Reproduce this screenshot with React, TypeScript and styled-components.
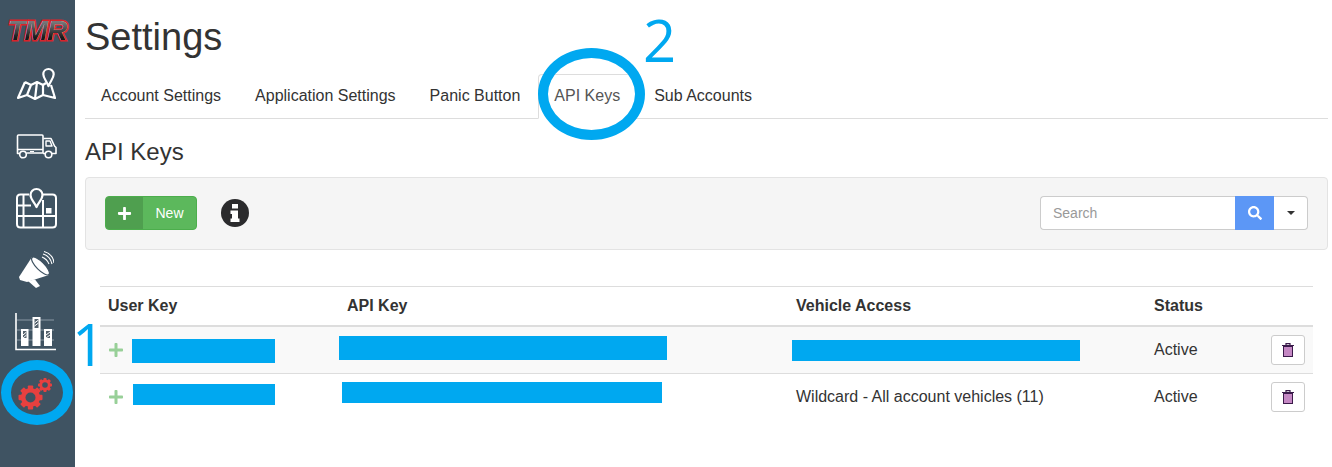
import React from 'react';
import styled, { createGlobalStyle } from 'styled-components';
import { FaPlus, FaSearch } from 'react-icons/fa';

const GlobalStyle = createGlobalStyle`
	html, body {
		margin: 0;
		padding: 0;
		background: #fff;
	}
	body {
		font-family: 'Liberation Sans', Arial, sans-serif;
		color: #333;
	}
`;

const MapIcon = () => (
	<svg width="44" height="36" viewBox="0 0 44 36" fill="none" stroke="#fff" strokeWidth="2.2" strokeLinejoin="round">
		<path d="M11 16 L17 19 L23 16 L29 19 L32 17 M11 16 L4 32 L13 29 L21 33 L29 29 L41 32 L37 19 M17 19 L13 29 M23 16 L21 33 M29 19 L29 29" />
		<path d="M34.500 3 a5.200 5.200 0 0 1 5.200 5.200 c0 4 -3.500 7 -5.200 12 c-1.700 -5 -5.200 -8 -5.200 -12 a5.200 5.200 0 0 1 5.200 -5.200 Z" fill="#3f5362" />
	</svg>
);

const TruckIcon = () => (
	<svg width="42" height="26" viewBox="0 0 42 26" fill="none" stroke="#fff" strokeWidth="1.600" strokeLinejoin="round">
		<path d="M4.500 20.500 H2.500 V17 M28 20 H11.500 M2.500 17 V3 Q2.500 2 3.500 2 H27 Q28 2 28 3 V20 M2.500 16.500 H28" />
		<path d="M28.500 5.500 H36 L39.500 13 L41 14.500 V20.500 H37 M30 20.500 H28" />
		<path d="M31 8 H35 L37 13 H31 Z" strokeWidth="1.400" />
		<circle cx="8" cy="21.500" r="3.300" />
		<circle cx="33.500" cy="21.500" r="3.300" />
		<path d="M15 18.500 H19" strokeWidth="1" />
	</svg>
);

const GridMapIcon = () => (
	<svg width="42" height="42" viewBox="0 0 42 42" fill="none" stroke="#fff" strokeWidth="2" strokeLinejoin="round">
		<path d="M14 7.500 H5.500 Q2 7.500 2 11 V37 Q2 40.500 5.500 40.500 H37.500 Q41 40.500 41 37 V11 Q41 7.500 37.500 7.500 H28" />
		<path d="M2 18.500 H16 M2 29 H41 M8.500 7.500 V40.500 M28 13 V40.500" />
		<path d="M21.500 2 a6 6 0 0 1 6 6 c0 4.500 -4 7 -6 12 c-2 -5 -6 -7.500 -6 -12 a6 6 0 0 1 6 -6 Z" fill="#3f5362" strokeWidth="2.200" />
		<rect x="31" y="21" width="5.500" height="5.500" fill="#fff" stroke="none" />
	</svg>
);

const MegaphoneIcon = () => (
	<svg width="36" height="38" viewBox="0 0 36 38" fill="none">
		<path d="M14 6 L31 24 L9 31 L2 29 L1 26 Z" fill="#fff" />
		<ellipse cx="22.500" cy="15" rx="12" ry="4" transform="rotate(45 22.500 15)" fill="#fff" stroke="#3f5362" strokeWidth="1.200" />
		<path d="M10 30 L17 28.500 L22 35 L18 37 Z" fill="#fff" />
		<path d="M24 6 Q29 8 31 13 M25 3 Q32 5 34 13 M26 0.500 Q35 3 36 12" stroke="#fff" strokeWidth="1.100" />
	</svg>
);

const ChartIcon = () => (
	<svg width="42" height="40" viewBox="0 0 42 40" fill="none">
		<path d="M2 8 H39 M2 18 H39 M2 28 H39" stroke="#8b99a4" strokeWidth="1" />
		<path d="M1 1 V37.500 H41" stroke="#fff" strokeWidth="1.600" />
		<rect x="6" y="17" width="7.500" height="17" fill="#fff" />
		<rect x="17.500" y="5" width="8" height="29" fill="#fff" />
		<rect x="29" y="17" width="8" height="17" fill="#fff" />
		<path d="M8 19 H11.500 V26 H8 Z M19.500 7 H23.500 V16 H19.500 Z M31 19 H35 V26 H31 Z" fill="#55626d" />
		<path d="M8 23 L11.500 20 M8 26 L11.500 23 M19.500 11 L23.500 8 M19.500 14 L23.500 11 M31 23 L35 20 M31 26 L35 23" stroke="#fff" strokeWidth="1" />
	</svg>
);

const Gear = ({ cx, cy, r, hole, teeth }: { cx: number; cy: number; r: number; hole: number; teeth: number }) => (
	<g>
		{Array.from({ length: teeth }, (_, i) => (
			<rect
				key={i}
				x={cx - r * 0.22}
				y={cy - r}
				width={r * 0.44}
				height={r * 2}
				rx="0.8"
				fill="#e8403f"
				transform={`rotate(${(i * 180) / teeth} ${cx} ${cy})`}
			/>
		))}
		<circle cx={cx} cy={cy} r={r * 0.8} fill="#e8403f" />
		<circle cx={cx} cy={cy} r={hole} fill="#3f5362" />
	</g>
);

const GearsIcon = () => (
	<svg width="36" height="36" viewBox="0 0 36 36">
		<Gear cx={12.500} cy={21.500} r={12} hole={5} teeth={4} />
		<Gear cx={27} cy={9} r={7} hole={2.800} teeth={4} />
	</svg>
);

const TrashIcon = () => (
	<svg width="12" height="14" viewBox="0 0 12 14" fill="none">
		<path d="M4 2 V0.700 H8 V2 M0 2.500 H12" stroke="#3a1a4a" strokeWidth="1.200" />
		<rect x="1.500" y="3.500" width="9" height="10" fill="#fff" stroke="#3a1a4a" strokeWidth="1" />
		<path d="M3 4 V13 M5 4 V13 M7 4 V13 M9 4 V13" stroke="#8a1088" strokeWidth="1" />
	</svg>
);

const InfoIcon = () => (
	<svg width="28" height="28" viewBox="0 0 28 28">
		<circle cx="14" cy="14" r="14" fill="#2b2b2d" />
		<path d="M11 5 H17 V9.500 H11 Z M9.500 11.500 H17 V19.500 H18.500 V23 H9.500 V19.500 H11 V15 H9.500 Z" fill="#fff" />
	</svg>
);

const rows = [
	{ id: 1, vehicles: '', striped: true },
	{ id: 2, vehicles: 'Wildcard - All account vehicles (11)', striped: false },
];

const App = () => {
	return (
		<Page>
			<GlobalStyle />
			<Sidebar>
				<Logo>TMR</Logo>
				<NavItem><MapIcon /></NavItem>
				<NavItem><TruckIcon /></NavItem>
				<NavItem><GridMapIcon /></NavItem>
				<NavItem><MegaphoneIcon /></NavItem>
				<NavItem><ChartIcon /></NavItem>
				<NavItem><GearsIcon /></NavItem>
			</Sidebar>
			<Main>
				<Title>Settings</Title>
				<Tabs>
					<Tab>Account Settings</Tab>
					<Tab>Application Settings</Tab>
					<Tab>Panic Button</Tab>
					<Tab $active>API Keys</Tab>
					<Tab>Sub Accounts</Tab>
				</Tabs>
				<SectionTitle>API Keys</SectionTitle>
				<Well>
					<NewButton>
						<NewIcon><FaPlus size={15} /></NewIcon>
						<NewLabel>New</NewLabel>
					</NewButton>
					<InfoButton><InfoIcon /></InfoButton>
					<SearchGroup>
						<SearchInput>Search</SearchInput>
						<SearchButton><FaSearch size={14} /></SearchButton>
						<CaretButton><Caret /></CaretButton>
					</SearchGroup>
				</Well>
				<KeysTable>
					<colgroup>
						<col width="239" />
						<col width="449" />
						<col width="358" />
						<col width="115" />
						<col width="52" />
					</colgroup>
					<thead>
						<tr>
							<Th>User Key</Th>
							<Th>API Key</Th>
							<Th>Vehicle Access</Th>
							<Th>Status</Th>
							<Th />
						</tr>
					</thead>
					<tbody>
						{rows.map((row) => (
							<Row key={row.id} $striped={row.striped}>
								<Td><Expand><FaPlus size={16} /></Expand></Td>
								<Td />
								<Td>{row.vehicles}</Td>
								<Td>Active</Td>
								<Td><TrashButton><TrashIcon /></TrashButton></Td>
							</Row>
						))}
					</tbody>
				</KeysTable>
			</Main>

			<Redact $x={132} $y={339} $w={143} $h={24} />
			<Redact $x={339} $y={336} $w={328} $h={24} />
			<Redact $x={792} $y={340} $w={288} $h={21} />
			<Redact $x={133} $y={384} $w={142} $h={21} />
			<Redact $x={342} $y={382} $w={320} $h={21} />
			<Ring $x={538} $y={48} $w={107} $h={92} />
			<Ring $x={1} $y={360} $w={72} $h={65} />
			<Digit $x={72} $y={315}>1</Digit>
			<Digit $x={643} $y={11}>2</Digit>
		</Page>
	);
};

const Page = styled.div`
	position: relative;
	display: flex;
	width: 1332px;
	height: 467px;
	overflow: hidden;
`;

const Sidebar = styled.nav`
	flex: none;
	width: 75px;
	background: #3f5362;
	display: flex;
	flex-direction: column;
`;

const Logo = styled.div`
	position: relative;
	height: 53px;
	padding-top: 14px;
	box-sizing: border-box;
	text-align: center;
	font-size: 28px;
	line-height: 33px;
	font-weight: 700;
	font-style: italic;
	letter-spacing: -0.5px;
	color: #e9e3e3;
	-webkit-text-stroke: 3px #d8232a;
	paint-order: stroke fill;

	&::after {
		content: 'TMR';
		position: absolute;
		left: 0;
		right: 0;
		top: 14px;
		background: linear-gradient(180deg, #77777a 25%, #19191b 72%);
		background-clip: text;
		-webkit-background-clip: text;
		color: transparent;
		-webkit-text-stroke: 0;
	}
`;

const NavItem = styled.div`
	height: 62px;
	width: 72px;
	display: flex;
	align-items: center;
	justify-content: center;
`;

const Main = styled.main`
	flex: 1;
	min-width: 0;
	padding: 0 4px 0 10px;
`;

const Title = styled.h1`
	margin: 17px 0 0;
	font-size: 38px;
	line-height: 40px;
	font-weight: 500;
	color: #333;
`;

const Tabs = styled.div`
	display: flex;
	margin-top: 17px;
	border-bottom: 1px solid #ddd;
	height: 45px;
	box-sizing: border-box;
`;

const Tab = styled.div<{ $active?: boolean }>`
	height: 45px;
	box-sizing: border-box;
	margin-right: 2px;
	padding: 9px 15px 11px;
	font-size: 16px;
	line-height: 23px;
	border: 1px solid ${(props) => (props.$active ? '#ddd' : 'transparent')};
	border-bottom-color: ${(props) => (props.$active ? '#fff' : 'transparent')};
	border-radius: 4px 4px 0 0;
	color: ${(props) => (props.$active ? '#555' : '#333')};
	background: ${(props) => (props.$active ? '#fff' : 'transparent')};
`;

const SectionTitle = styled.h2`
	margin: 20px 0 0;
	font-size: 24px;
	line-height: 26px;
	font-weight: 500;
	color: #333;
`;

const Well = styled.div`
	margin-top: 12px;
	height: 73px;
	box-sizing: border-box;
	padding: 0 19px 1px;
	display: flex;
	align-items: center;
	background: #f5f5f5;
	border: 1px solid #e3e3e3;
	border-radius: 4px;
`;

const NewButton = styled.div`
	display: flex;
	width: 92px;
	height: 34px;
	border: 1px solid #4cae4c;
	border-radius: 4px;
	box-sizing: border-box;
	overflow: hidden;
	background: #5cb85c;
	color: #fff;
`;

const NewIcon = styled.span`
	width: 37px;
	display: flex;
	align-items: center;
	justify-content: center;
	background: #4f9f4f;
`;

const NewLabel = styled.span`
	flex: 1;
	font-size: 14px;
	line-height: 32px;
	text-align: center;
`;

const InfoButton = styled.span`
	display: flex;
	margin-left: 24px;
`;

const SearchGroup = styled.div`
	display: flex;
	height: 34px;
	margin-left: auto;
`;

const SearchInput = styled.div`
	width: 195px;
	box-sizing: border-box;
	padding: 0 12px;
	border: 1px solid #ccc;
	border-right: none;
	border-radius: 4px 0 0 4px;
	background: #fff;
	font-size: 14px;
	line-height: 32px;
	color: #999;
`;

const SearchButton = styled.div`
	width: 39px;
	display: flex;
	align-items: center;
	justify-content: center;
	background: #5c97f6;
	color: #fff;
`;

const CaretButton = styled.div`
	width: 34px;
	box-sizing: border-box;
	display: flex;
	align-items: center;
	justify-content: center;
	background: #fff;
	border: 1px solid #ccc;
	border-left: none;
	border-radius: 0 4px 4px 0;
`;

const Caret = styled.span`
	width: 0;
	height: 0;
	border-top: 4px solid #333;
	border-left: 4px solid transparent;
	border-right: 4px solid transparent;
`;

const KeysTable = styled.table`
	margin: 36px 0 0 15px;
	width: 1213px;
	table-layout: fixed;
	border-collapse: collapse;
	font-size: 16px;
	color: #333;
`;

const Th = styled.th`
	height: 38px;
	padding: 0 8px;
	text-align: left;
	font-weight: 700;
	border-top: 1px solid #ddd;
	border-bottom: 2px solid #ddd;
`;

const Row = styled.tr<{ $striped: boolean }>`
	height: 47px;
	background: ${(props) => (props.$striped ? '#f9f9f9' : '#fff')};
`;

const Td = styled.td`
	padding: 0 8px;
	border-bottom: 1px solid #ddd;
	${Row}:last-child & {
		border-bottom: none;
	}
`;

const Expand = styled.span`
	display: flex;
	color: #98d098;
`;

const TrashButton = styled.div`
	width: 34px;
	height: 30px;
	margin-left: 2px;
	box-sizing: border-box;
	display: flex;
	align-items: center;
	justify-content: center;
	border: 1px solid #ccc;
	border-radius: 3px;
	background: #fff;
`;

const Redact = styled.div<{ $x: number; $y: number; $w: number; $h: number }>`
	position: absolute;
	left: ${(props) => props.$x}px;
	top: ${(props) => props.$y}px;
	width: ${(props) => props.$w}px;
	height: ${(props) => props.$h}px;
	background: #00a8f0;
`;

const Ring = styled.div<{ $x: number; $y: number; $w: number; $h: number }>`
	position: absolute;
	left: ${(props) => props.$x}px;
	top: ${(props) => props.$y}px;
	width: ${(props) => props.$w}px;
	height: ${(props) => props.$h}px;
	box-sizing: border-box;
	border: 10px solid #00a8f0;
	border-radius: 50%;
`;

const Digit = styled.div<{ $x: number; $y: number }>`
	position: absolute;
	left: ${(props) => props.$x}px;
	top: ${(props) => props.$y}px;
	font-family: 'Open Sans', sans-serif;
	font-weight: 400;
	font-size: 58px;
	line-height: 58px;
	color: #00a8f0;
`;

export default App;
